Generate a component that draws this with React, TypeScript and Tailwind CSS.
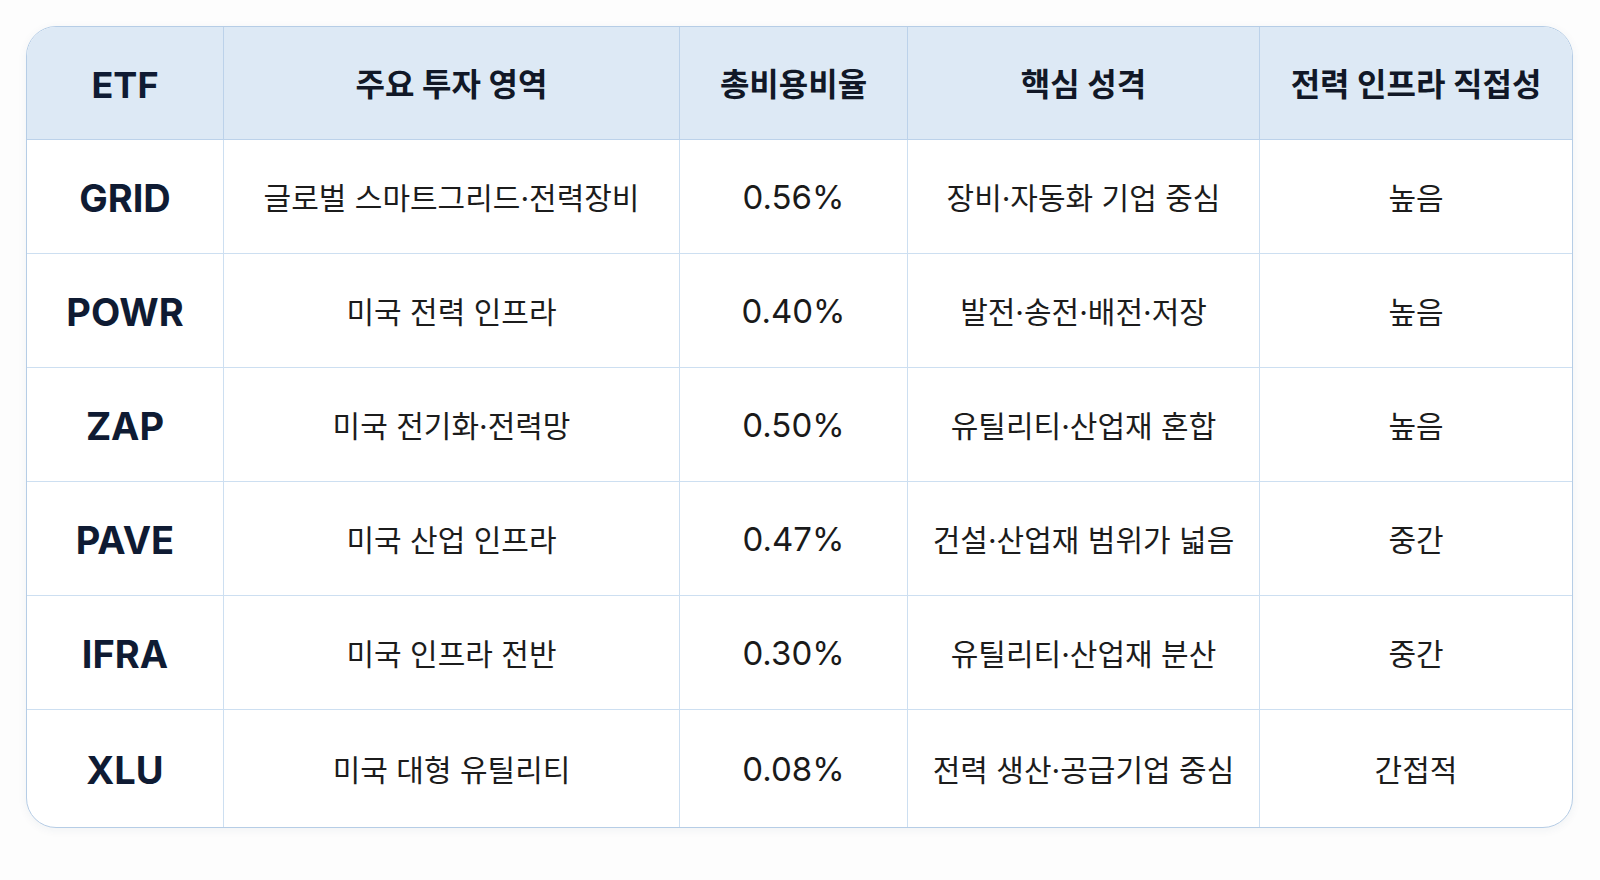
const headers = ["ETF", "주요 투자 영역", "총비용비율", "핵심 성격", "전력 인프라 직접성"]

const rows = [
  ["GRID", "글로벌 스마트그리드·전력장비", "0.56%", "장비·자동화 기업 중심", "높음"],
  ["POWR", "미국 전력 인프라", "0.40%", "발전·송전·배전·저장", "높음"],
  ["ZAP", "미국 전기화·전력망", "0.50%", "유틸리티·산업재 혼합", "높음"],
  ["PAVE", "미국 산업 인프라", "0.47%", "건설·산업재 범위가 넓음", "중간"],
  ["IFRA", "미국 인프라 전반", "0.30%", "유틸리티·산업재 분산", "중간"],
  ["XLU", "미국 대형 유틸리티", "0.08%", "전력 생산·공급기업 중심", "간접적"],
]

const font = "[font-family:Inter,'Noto_Sans_CJK_KR',sans-serif]"

export default function App() {
  return (
    <div className={`min-h-[880px] w-[1600px] bg-[#fdfdfd] p-[26px] ${font}`}>
      <div className="h-[802px] w-[1547px] overflow-hidden rounded-[30px] border-[1.5px] border-[#b6cde6] bg-white shadow-[0_2px_10px_rgba(30,60,110,0.06)]">
        <div className="grid h-full grid-cols-[197px_456px_228px_352px_minmax(0,1fr)] grid-rows-[113px_repeat(5,114px)_minmax(0,1fr)]">
          {headers.map((h, i) => (
            <div
              key={h}
              className={`flex items-center justify-center border-b-[1.5px] border-[#bcd2ea] bg-[#dde9f5] pt-1 ${
                i < headers.length - 1 ? "border-r-[1.5px]" : ""
              } ${
                i === 0
                  ? "text-[36px] font-bold text-[#0f1b33]"
                  : "text-[32px] font-bold text-[#111827]"
              }`}
            >
              {h}
            </div>
          ))}
          {rows.map((row, r) =>
            row.map((cell, c) => (
              <Cell key={`${r}-${c}`} col={c} last={r === rows.length - 1}>
                {cell}
              </Cell>
            ))
          )}
        </div>
      </div>
    </div>
  )
}

function Cell({
  col,
  last,
  children,
}: {
  col: number
  last: boolean
  children: string
}) {
  const style =
    col === 0
      ? "text-[38px] font-bold text-[#0f1b33]"
      : col === 2
        ? "text-[33px] font-normal text-[#1a1a1a]"
        : "text-[30px] font-normal text-[#1c1c1c]"

  return (
    <div
      className={`flex items-center justify-center border-[#cddff1] pt-[3px] ${
        last ? "" : "border-b-[1.5px]"
      } ${col < 4 ? "border-r-[1.5px]" : ""} ${style}`}
    >
      {children}
    </div>
  )
}
